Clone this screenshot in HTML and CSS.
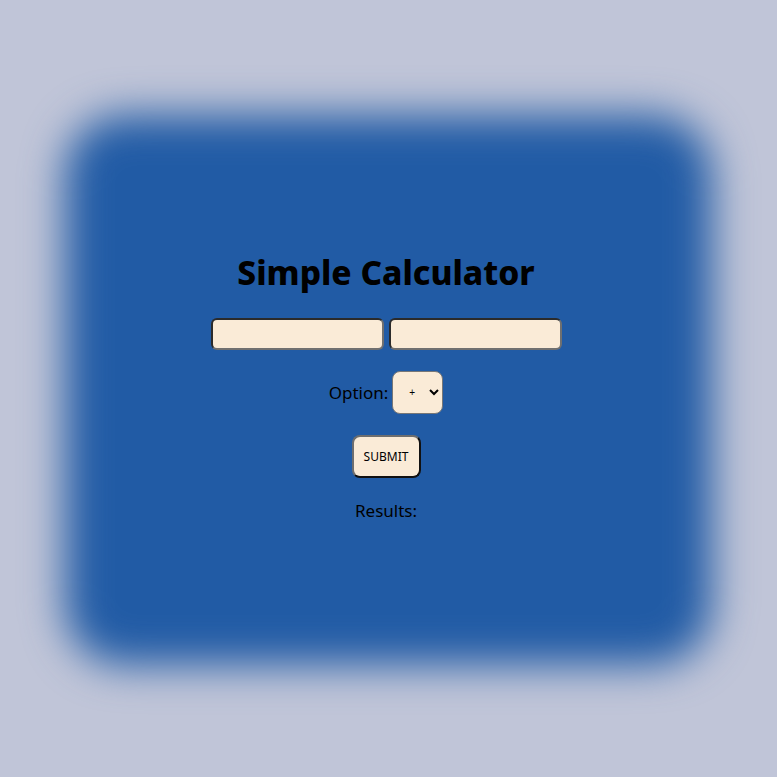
FILE: index.html
```html
<!DOCTYPE html>
<html>
<head>
<meta charset="utf-8">
<title>Simple Calculator</title>
<link rel="stylesheet" href="styles.css">
</head>
<body>
<main class="stage">
  <section class="calc">
    <h1 class="title">Simple Calculator</h1>
    <div class="inputs">
      <input class="num" type="text">
      <input class="num" type="text">
    </div>
    <div class="option-row">
      <label class="label">Option:</label>
      <select class="op">
        <option>+</option>
        <option>-</option>
        <option>*</option>
        <option>/</option>
      </select>
    </div>
    <div class="submit-row">
      <button class="submit">SUBMIT</button>
    </div>
    <p class="results">Results:</p>
  </section>
</main>
</body>
</html>
```
FILE: styles.css
```css
html, body {
  margin: 0;
  padding: 0;
}
body {
  background: #c0c5d8;
  font-family: "Noto Sans", "Open Sans", sans-serif;
  color: #000;
  overflow: hidden;
}
.stage {
  width: 777px;
  height: 777px;
  display: flex;
  align-items: center;
  justify-content: center;
}
.calc {
  position: relative;
  box-sizing: border-box;
  width: 647px;
  height: 550px;
  margin-top: 3px;
  padding: 0 5px 6px 0;
  display: flex;
  flex-direction: column;
  align-items: center;
  justify-content: center;
  isolation: isolate;
}
.calc::before {
  content: "";
  position: absolute;
  inset: 0;
  z-index: -1;
  background: #215ba5;
  border-radius: 60px;
  filter: blur(21px);
}
.title {
  margin: 0;
  font-size: 33.5px;
  font-weight: 800;
  line-height: 40px;
}
.inputs {
  display: flex;
  gap: 5px;
  margin-top: 26px;
}
.num {
  box-sizing: border-box;
  width: 173px;
  height: 32px;
  background: #faebd7;
  border: 2px solid;
  border-color: #2b2b2b #707070 #707070 #2b2b2b;
  border-radius: 6px;
  padding: 1px 4px;
}
.option-row {
  display: flex;
  align-items: center;
  margin-top: 21px;
}
.label {
  font-size: 17px;
  margin-right: 4px;
}
.op {
  box-sizing: border-box;
  width: 51px;
  height: 43px;
  background: #faebd7;
  border: 1px solid #777;
  border-radius: 8px;
  font-size: 10px;
  padding: 0 6px 0 12px;
  color: #000;
}
.submit-row {
  margin-top: 21px;
}
.submit {
  box-sizing: border-box;
  width: 69px;
  height: 43px;
  background: #faebd7;
  border: 2px solid;
  border-color: #6e6e6e #111 #111 #6e6e6e;
  border-radius: 8px;
  font-family: "Noto Sans", sans-serif;
  font-size: 12px;
  color: #000;
  padding: 0;
}
.results {
  margin: 21px 0 0;
  font-size: 17px;
}
```
